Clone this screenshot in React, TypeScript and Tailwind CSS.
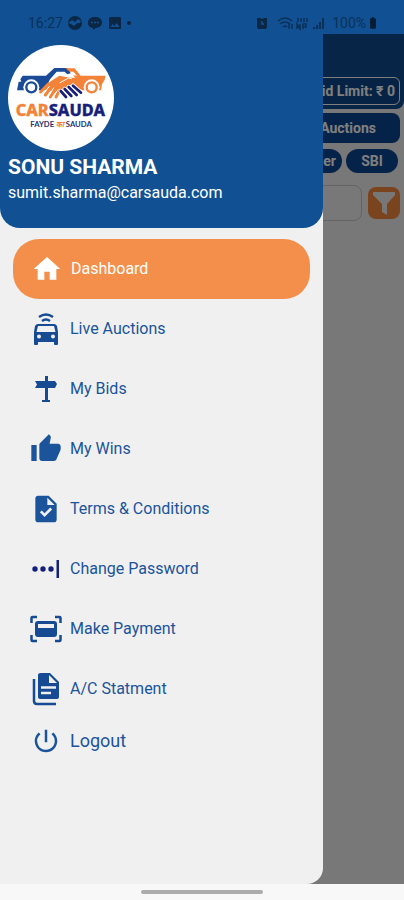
import type { ReactNode } from 'react';
import {
  MdHome,
  MdThumbUp,
  MdTask,
  MdPowerSettingsNew,
  MdBatteryFull,
  MdImage,
} from 'react-icons/md';

function Logo() {
  return (
    <svg viewBox="0 0 318 318" className="size-[106px]" role="img" aria-label="Carsauda">
      <circle cx="159" cy="159" r="159" fill="#fff" />
      <path d="M44 92H114L139 69H178L190 84L178 88L170 80H146L126 103L110 136H27L32 110H40L37 103Z" fill="#1b4a96" />
      <path d="M172 70H200L218 92H293L290 104L282 118L279 136H222L208 106L190 84Z" fill="#f28339" />
      <path d="M192 91L186 80H196L207 92Z" fill="#fff" />
      <circle cx="70" cy="127" r="24" fill="#fff" />
      <circle cx="70" cy="127" r="15" fill="none" stroke="#1b4a96" strokeWidth="7" />
      <circle cx="251" cy="127" r="24" fill="#fff" />
      <circle cx="251" cy="127" r="15" fill="none" stroke="#f28339" strokeWidth="7" />
      <path d="M120 114L154 92L186 98L214 98L226 124L218 138L202 124L186 120L172 132L148 142L108 134Z" fill="#f28339" />
      <g stroke="#f28339" strokeWidth="9" strokeLinecap="round">
        <path d="M120 118L98 141M132 124L112 150M144 130L127 156M156 132L144 156" />
      </g>
      <g stroke="#fff" strokeWidth="3" strokeLinecap="round">
        <path d="M124 124L106 146M137 129L120 154M150 134L136 157M156 113L182 99L190 101" fill="none" />
      </g>
      <g stroke="#fff" strokeWidth="13" strokeLinecap="round">
        <path d="M158 138L174 156M170 132L190 153M182 126L206 150M195 122L219 143" />
      </g>
      <g stroke="#171f7a" strokeWidth="8" strokeLinecap="round">
        <path d="M158 138L174 156M170 132L190 153M182 126L206 150M195 122L219 143" />
      </g>
      <text x="157" y="212" textAnchor="middle" fontFamily="'Noto Sans', sans-serif" fontWeight="800" fontSize="49" fill="#f28339" stroke="#f28339" strokeWidth="1">
        CAR<tspan fill="#171f7a" stroke="#171f7a">SAUDA</tspan>
      </text>
      <text x="159" y="247" textAnchor="middle" fontFamily="Lato, 'Open Sans', sans-serif" fontWeight="700" fontSize="23" fill="#25356e">
        FAYDE <tspan fill="#f28339" fontStyle="italic">का</tspan> SAUDA
      </text>
    </svg>
  );
}

function LiveCarIcon() {
  return (
    <svg viewBox="0 0 30 34" className="h-[34px] w-[30px]" fill="none">
      <path d="M8 5Q15 0 22 5M11 9Q15 6 19 9" stroke="#164a92" strokeWidth="2.400" />
      <path fillRule="evenodd" fill="#164a92" d="M7 12H23Q25 12 26 14L27 20V32Q27 33 26 33H24Q23 33 23 32V30H7V32Q7 33 6 33H4Q3 33 3 32V20L4 14Q5 12 7 12ZM7 14L5.500 20H24.500L23 14ZM8 22.500A2 2 0 1 0 8 26.500A2 2 0 1 0 8 22.500ZM22 22.500A2 2 0 1 0 22 26.500A2 2 0 1 0 22 22.500Z" />
    </svg>
  );
}

function SignpostIcon() {
  return (
    <svg viewBox="0 0 30 30" className="size-[30px]" fill="#164a92">
      <path d="M14 2H17V7H24L26 10L24 14H17V26H19V28H11V26H14V14H4L6 10.500L4 7H14Z" />
    </svg>
  );
}

function PasswordIcon() {
  return (
    <svg viewBox="0 0 30 30" className="size-[30px]" fill="#14207c">
      <circle cx="4" cy="15" r="2.700" />
      <circle cx="12" cy="15" r="2.700" />
      <circle cx="20" cy="15" r="2.700" />
      <path d="M25.500 6H28V24H25.500Z" />
    </svg>
  );
}

function PaymentIcon() {
  return (
    <svg viewBox="0 0 32 28" className="h-7 w-8">
      <path d="M1.500 8V3Q1.500 2 2.500 2H7M25 2H29.500Q30.500 2 30.500 3V8M30.500 20V25Q30.500 26 29.500 26H25M7 26H2.500Q1.500 26 1.500 25V20" fill="none" stroke="#164a92" strokeWidth="2.500" />
      <path fillRule="evenodd" fill="#164a92" d="M8 6H24Q27 6 27 9V19Q27 22 24 22H8Q5 22 5 19V9Q5 6 8 6ZM8 9V13H24V9Z" />
    </svg>
  );
}

function StatementIcon() {
  return (
    <svg viewBox="0 0 30 34" className="h-[34px] w-[30px]">
      <path d="M3 7V29Q3 32 6 32H25" fill="none" stroke="#164a92" strokeWidth="2.500" />
      <path d="M10 1H19L28 10V25Q28 27 26 27H9Q7 27 7 25V3Q7 1 10 1Z" fill="#164a92" />
      <path d="M18 3V11H26Z" fill="#f0f0f0" />
      <path d="M10 15.500H25M10 21H20" stroke="#f0f0f0" strokeWidth="2.400" />
    </svg>
  );
}

function FunnelIcon() {
  return (
    <svg viewBox="0 0 24 26" className="h-[26px] w-6" fill="#eee">
      <path d="M1 2H23V5L15 14V25L10 22V14L1 5Z" />
    </svg>
  );
}

type Item = { label: string; icon: ReactNode };

const items: Item[] = [
  { label: 'Live Auctions', icon: <LiveCarIcon /> },
  { label: 'My Bids', icon: <SignpostIcon /> },
  { label: 'My Wins', icon: <MdThumbUp className="size-8" /> },
  { label: 'Terms & Conditions', icon: <MdTask className="size-8" /> },
  { label: 'Change Password', icon: <PasswordIcon /> },
  { label: 'Make Payment', icon: <PaymentIcon /> },
  { label: 'A/C Statment', icon: <StatementIcon /> },
];

function StatusBar() {
  return (
    <header className="flex h-[34px] shrink-0 items-center justify-between bg-[#115193] px-6 pt-3 pl-7 text-sm text-[#0b3059]">
      <div className="flex items-center gap-1">
        <span>16:27</span>
        <svg viewBox="0 0 16 16" className="size-4">
          <circle cx="8" cy="8" r="7" fill="#0a2745" />
          <path d="M1 8L5 5L8 7L11 4L14 6Q13 9 10 8L7 11L4 9Z" fill="#115193" />
        </svg>
        <svg viewBox="0 0 16 16" className="size-4">
          <path d="M8 2C12 2 15 4 15 7.500C15 11 12 12.500 9 13L6 15V13C3 12.500 1 11 1 7.500C1 4 4 2 8 2Z" fill="#0a2745" />
          <path d="M4 7.500H6M7 7.500H9M10 7.500H12" stroke="#115193" strokeWidth="1.500" />
        </svg>
        <MdImage className="size-4 text-[#0a2745]" />
        <span className="size-1 rounded-full bg-[#0a2745]" />
      </div>
      <div className="flex items-center">
        <svg viewBox="0 0 12 12" className="mr-2 size-3">
          <path d="M1 1H4L6 2L8 1H11V10L10 12H2L1 10Z" fill="#0a2745" />
          <path d="M6 4V7H8" fill="none" stroke="#115193" strokeWidth="1.500" />
        </svg>
        <svg viewBox="0 0 52 16" className="mr-1 h-4 w-[52px]" fill="none" stroke="#0b3059" strokeWidth="1.500">
          <path d="M2 6Q9 0 16 6M4 9Q9 5 14 9M7 12Q9 10 11 12M13 9V14M16 14V9" />
          <path d="M21 14V9L24 14V9M27 14V9H30V12H27M22 3V7M25 3V7M28 3V7M31 3V7" />
          <path d="M38 14V12M41 14V10M44 14V7M47 14V3" strokeWidth="2" />
        </svg>
        <span>100%</span>
        <MdBatteryFull className="size-3.5 text-[#061c33]" />
      </div>
    </header>
  );
}

function AuctionPage() {
  return (
    <div className="flex flex-col items-stretch">
      <div className="flex h-[75px] items-end justify-end rounded-b-lg bg-[#0f4c8e] px-1 pb-1">
        <p className="flex h-7 items-center rounded-md border border-white bg-[#0c468c] px-1 text-sm font-bold text-white">Bid Limit: ₹ 0</p>
      </div>
      <div className="flex flex-col px-1 pt-1">
        <button className="h-[30px] rounded-lg bg-[#0b4590] pr-6 text-right text-sm font-bold text-white">Live Auctions</button>
        <div className="flex justify-end gap-1 px-0.5 pt-1.5">
          <button className="h-6 rounded-full bg-[#0b4590] px-1.5 text-sm font-bold text-white">Other</button>
          <button className="h-6 w-[52px] rounded-full bg-[#0b4590] text-sm font-bold text-white">SBI</button>
        </div>
        <div className="flex items-center gap-1.5 pt-3">
          <input aria-label="Search vehicles" className="h-9 min-w-0 flex-1 rounded-lg border border-[#c8c8c8]" />
          <button aria-label="Filter" className="flex size-8 items-center justify-center rounded-lg bg-[#f58a3c]">
            <FunnelIcon />
          </button>
        </div>
      </div>
    </div>
  );
}

function Drawer() {
  return (
    <aside className="absolute inset-y-0 left-0 flex w-4/5 flex-col rounded-br-2xl bg-[#f0f0f0]">
      <div className="rounded-b-[20px] bg-[#115193] px-2 pt-[11px] pb-[25px] text-white">
        <Logo />
        <h1 className="pt-1 text-[21px] leading-6 font-bold">SONU SHARMA</h1>
        <p className="pt-1 text-base leading-5">sumit.sharma@carsauda.com</p>
      </div>
      <nav className="flex flex-col px-[13px] pt-[11px] text-base text-[#1b549b]">
        <a href="#dashboard" aria-current="page" className="flex h-15 items-center gap-2 rounded-[26px] bg-[#f48f4b] pl-[18px] text-white">
          <MdHome className="size-8" />
          Dashboard
        </a>
        {items.map((item) => (
          <a key={item.label} href="#menu" className="flex h-15 items-center gap-2 pl-[17px]">
            <span className="flex w-8 justify-center">{item.icon}</span>
            {item.label}
          </a>
        ))}
        <button className="flex h-11 items-center gap-2 pl-[17px] text-lg">
          <span className="flex w-8 justify-center">
            <MdPowerSettingsNew className="size-[30px]" />
          </span>
          Logout
        </button>
      </nav>
    </aside>
  );
}

export default function App() {
  return (
    <div className="flex min-h-screen flex-col bg-[#f8f8f8] font-[Roboto,sans-serif]">
      <StatusBar />
      <main className="relative flex min-h-[750px] flex-1 flex-col overflow-hidden bg-[#f0f0f0]">
        <AuctionPage />
        <div className="absolute inset-0 bg-black/50" />
        <Drawer />
      </main>
      <footer className="flex h-4 shrink-0 items-center justify-center">
        <span className="h-1 w-[30%] rounded-full bg-[#acacac]" />
      </footer>
    </div>
  );
}
